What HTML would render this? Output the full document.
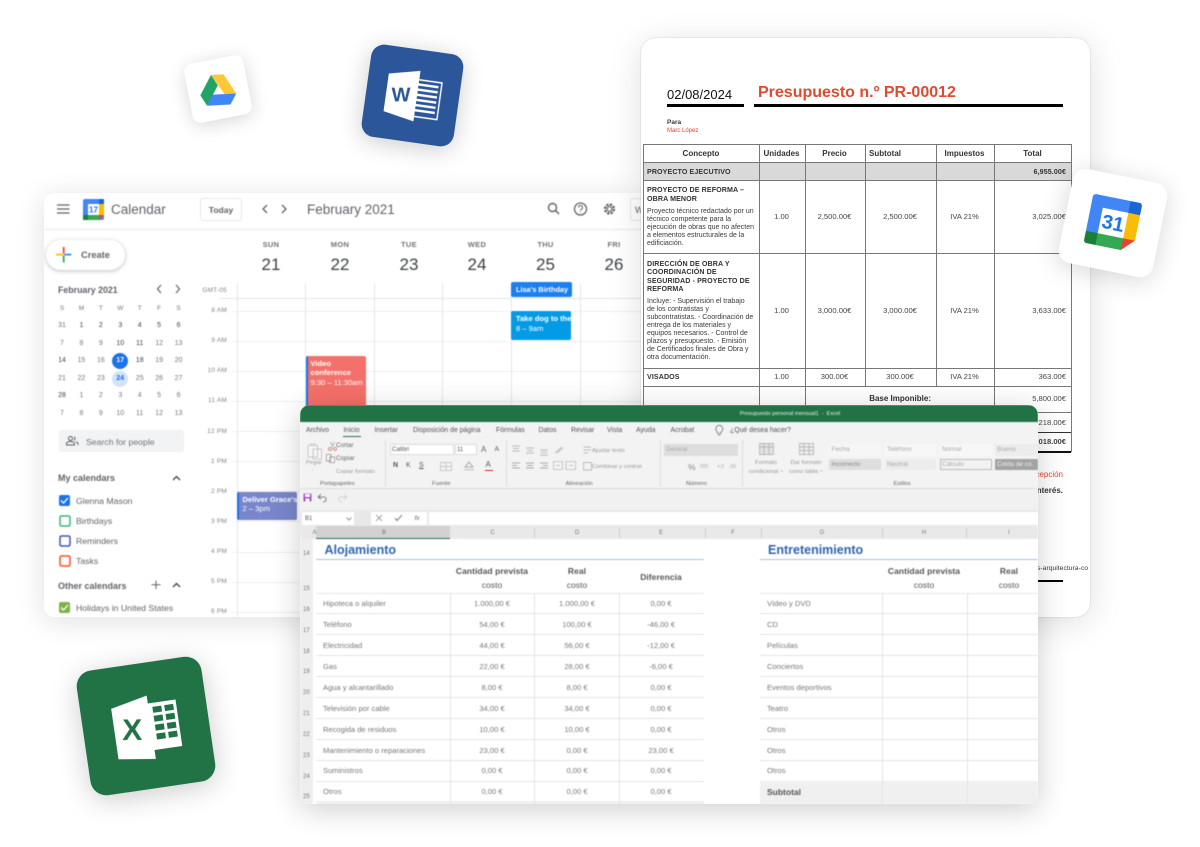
<!DOCTYPE html>
<html lang="es"><head><meta charset="utf-8"><title>Presupuesto</title>
<style>
html,body{margin:0;padding:0;background:#fff}
body{width:1200px;height:847px;position:relative;overflow:hidden;font-family:"Liberation Sans",sans-serif}
.p{position:absolute;overflow:hidden}
.t{position:absolute;white-space:nowrap;line-height:0}
.c{transform:translateX(-50%)}
.r{transform:translateX(-100%)}
.b{font-weight:bold}
.l{position:absolute;background:#ddd}
.box{position:absolute;box-sizing:border-box}
svg{position:absolute;overflow:visible}
#cal{left:44px;top:193px;width:600px;height:424px;background:#fff;border-radius:10px 0 0 10px;box-shadow:0 4px 28px rgba(0,0,0,.13);overflow:visible;color:#3c4043}
#calin{position:absolute;left:-44px;top:-193px;width:1200px;height:847px;clip-path:inset(193px 556px 230px 44px round 10px 0 0 10px);filter:blur(.4px)}
#calin .t{color:#3c4043;font-size:9px}
.g{color:#70757a!important}
.hd{font-size:7.5px!important;color:#70757a!important;font-weight:bold;letter-spacing:.3px}
.dn{font-size:17px!important;color:#3c4043}
.tm{font-size:6.5px!important;color:#80868b!important;letter-spacing:.2px}
#mini{position:absolute;left:52.3px;top:299.5px;display:grid;grid-template-columns:repeat(7,19.43px);grid-auto-rows:17.5px;font-size:7px;color:#3c4043;text-align:center;line-height:17.5px}
#mini span{display:block}#mini .o{color:#70757a}#mini .h{color:#70757a;font-size:6.5px}
#doc{left:641px;top:38px;width:449px;height:579px;background:#fff;border-radius:14px;box-shadow:0 6px 34px rgba(0,0,0,.13),0 0 1px rgba(0,0,0,.35)}
#docin{position:absolute;left:-641px;top:-38px;width:1200px;height:847px;filter:blur(.35px)}
#docin .t{font-size:7px;color:#3a3a3a}
#docin .v{font-size:7.6px;color:#444}
#docin .h{font-size:8px;font-weight:bold;color:#333}
#docin .bh{font-size:7.1px;font-weight:bold;color:#333;letter-spacing:.1px}
#docin .l{background:#777}
#xl{left:300px;top:405px;width:738px;height:399px;background:#fff;border-radius:10px 10px 6px 6px;box-shadow:0 5px 30px rgba(0,0,0,.2)}
#xlin{position:absolute;left:-300px;top:-405px;width:1200px;height:847px;filter:blur(.4px)}
#xlin .t{font-size:7.6px;color:#777}
.tab{font-size:6.9px!important;color:#555!important}
.rb{font-size:5.9px!important;color:#999!important}
.gl{font-size:5.9px!important;color:#666!important}
.nm{font-size:6px!important;color:#777!important}
.ch{font-size:6px!important;color:#777!important}
.hh{font-size:8.5px!important;font-weight:bold;color:#555!important;letter-spacing:.05px}
.sec{font-size:12.5px!important;font-weight:bold;color:#2f63ae!important}
.tile{position:absolute;box-sizing:border-box}
</style></head><body>

<div class="tile" style="left:188px;top:59px;width:60px;height:60px;border-radius:8px;background:#fff;transform:rotate(-11deg);box-shadow:0 3px 18px rgba(0,0,0,.16)">
<svg width="60" height="60" viewBox="0 0 60 60" style="left:0;top:0;filter:blur(.3px)">
<g transform="rotate(8 30 30) translate(3 3) scale(.9)">
<polygon points="23,14 37,14 50,36 37,36" fill="#fcc934"/>
<polygon points="23,14 30,26 17,48 10,36" fill="#1fa463"/>
<polygon points="23.5,36 50,36 43,48 17,48" fill="#4285f4"/>
</g></svg></div>

<div class="tile" style="left:366px;top:49px;width:93px;height:93px;border-radius:13px;background:#2b579a;transform:rotate(8deg);box-shadow:0 4px 24px rgba(0,0,0,.2)">
<svg width="93" height="93" viewBox="0 0 93 93" style="left:0;top:0;filter:blur(.3px)">
<polygon points="50,30 74,30 74,67 50,67" fill="none" stroke="#fff" stroke-width="1.4"/>
<g fill="#fff"><rect x="50" y="33.5" width="21" height="2.4"/><rect x="50" y="38.7" width="21" height="2.4"/><rect x="50" y="43.9" width="21" height="2.4"/><rect x="50" y="49.1" width="21" height="2.4"/><rect x="50" y="54.3" width="21" height="2.4"/><rect x="50" y="59.5" width="21" height="2.4"/></g>
<polygon points="20,28 51,21 51,72 20,66" fill="#fff"/>
<text x="35" y="54" text-anchor="middle" font-family="Liberation Sans" font-weight="bold" font-size="20" fill="#2b579a" transform="rotate(-8 35 47)">W</text>
</svg></div>

<div class="tile" style="left:83px;top:663px;width:126px;height:126px;border-radius:16px;background:#217346;transform:rotate(-8.3deg);box-shadow:0 5px 28px rgba(0,0,0,.2)">
<svg width="126" height="126" viewBox="0 0 126 126" style="left:0;top:0;filter:blur(.3px)">
<rect x="66" y="41" width="30" height="47" fill="#fff"/>
<g fill="#217346"><rect x="72" y="45" width="9" height="6"/><rect x="84" y="45" width="9" height="6"/><rect x="72" y="54" width="9" height="6"/><rect x="84" y="54" width="9" height="6"/><rect x="72" y="63" width="9" height="6"/><rect x="84" y="63" width="9" height="6"/><rect x="72" y="72" width="9" height="6"/><rect x="84" y="72" width="9" height="6"/></g>
<polygon points="31,41 68,33 68,97 31,92" fill="#fff"/>
<text x="49" y="75" text-anchor="middle" font-family="Liberation Sans" font-weight="bold" font-size="30" fill="#217346" transform="rotate(8 49 64)">X</text>
</svg></div>

<div class="p" id="cal" style="overflow:visible"><div id="calin">
<div class="l" style="left:44px;top:229px;width:600px;height:1px;background:#e8eaed"></div>
<svg width="14" height="10" style="left:57px;top:204px"><path d="M0 1H12.500M0 5H12.500M0 9H12.500" stroke="#5f6368" stroke-width="1.300"/></svg>
<svg width="21" height="21" viewBox="0 0 21 21" style="left:83px;top:199px">
<rect width="21" height="21" rx="2" fill="#4285f4"/><rect x="16" y="0" width="5" height="5" fill="#1967d2"/><rect x="16" y="5" width="5" height="11" fill="#fbbc04"/><rect x="5" y="16" width="11" height="5" fill="#34a853"/><rect x="0" y="16" width="5" height="5" fill="#188038"/><polygon points="16,16 21,16 16,21" fill="#ea4335"/><rect x="5" y="5" width="11" height="11" fill="#fff"/>
<text x="10.500" y="13.500" text-anchor="middle" font-family="Liberation Sans" font-size="8" font-weight="bold" fill="#1a73e8">17</text></svg>
<span class="t" style="left:111px;top:209.500px;font-size:13.500px;color:#5f6368">Calendar</span>
<div class="box" style="left:200px;top:198px;width:42px;height:23px;border:1px solid #e5e7e9;border-radius:3px"></div>
<span class="t c b" style="left:221px;top:209.500px;font-size:8.500px;color:#5f6368">Today</span>
<svg width="40" height="12" style="left:260px;top:203px"><path d="M7 2L3 6L7 10M22 2L26 6L22 10" fill="none" stroke="#5f6368" stroke-width="1.300"/></svg>
<span class="t" style="left:307px;top:209.500px;font-size:13.500px;color:#5f6368">February 2021</span>
<svg width="80" height="16" style="left:546px;top:201px"><circle cx="6.500" cy="6.500" r="4" fill="none" stroke="#5f6368" stroke-width="1.400"/><path d="M9.500 9.500L13 13" stroke="#5f6368" stroke-width="1.500"/><circle cx="34.500" cy="8" r="6" fill="none" stroke="#5f6368" stroke-width="1.300"/><path d="M32.500 6.500a2 2 0 1 1 3 1.700c-.7.400-1 .8-1 1.500M34.500 11v.8" fill="none" stroke="#5f6368" stroke-width="1"/><circle cx="63.500" cy="8" r="4.300" fill="none" stroke="#5f6368" stroke-width="2.600" stroke-dasharray="2.200 1.200"/><circle cx="63.500" cy="8" r="2.200" fill="none" stroke="#5f6368" stroke-width="1"/></svg>
<div class="box" style="left:630px;top:198px;width:30px;height:23px;border:1px solid #e5e7e9;border-radius:3px"></div>
<span class="t" style="left:635px;top:209.500px;font-size:9px;color:#5f6368">W</span>

<div class="box" style="left:46px;top:240px;width:79px;height:30px;border-radius:15px;background:#fff;box-shadow:0 1px 4px rgba(60,64,67,.35)"></div>
<svg width="16" height="16" style="left:56px;top:247px"><rect x="0" y="6.700" width="7" height="1.800" fill="#fbbc04"/><rect x="8.300" y="6.700" width="7" height="1.800" fill="#4285f4"/><rect x="6.800" y="0" width="1.800" height="6.700" fill="#ea4335"/><rect x="6.800" y="8.500" width="1.800" height="7" fill="#34a853"/></svg>
<span class="t b" style="left:81px;top:254.500px;font-size:9.300px;color:#5f6368">Create</span>

<span class="t b" style="left:58px;top:289.500px;font-size:8.800px;color:#5f6368">February 2021</span>
<svg width="30" height="10" style="left:155px;top:284px"><path d="M6 1L2.500 5L6 9M21 1L24.500 5L21 9" fill="none" stroke="#5f6368" stroke-width="1.200"/></svg>
<div class="box" style="left:112px;top:353px;width:16px;height:16px;border-radius:50%;background:#1a73e8"></div>
<div class="box" style="left:112px;top:370.500px;width:16px;height:16px;border-radius:50%;background:#d2e3fc"></div>
<div id="mini"><span class="h">S</span><span class="h">M</span><span class="h">T</span><span class="h">W</span><span class="h">T</span><span class="h">F</span><span class="h">S</span>
<span class="o">31</span><span>1</span><span>2</span><span>3</span><span>4</span><span>5</span><span>6</span>
<span class="o">7</span><span class="o">8</span><span class="o">9</span><span>10</span><span>11</span><span class="o">12</span><span class="o">13</span>
<span>14</span><span class="o">15</span><span class="o">16</span><span style="color:#fff;font-weight:bold">17</span><span>18</span><span class="o">19</span><span class="o">20</span>
<span class="o">21</span><span class="o">22</span><span class="o">23</span><span style="color:#1a73e8;font-weight:bold">24</span><span class="o">25</span><span class="o">26</span><span class="o">27</span>
<span>28</span><span class="o">1</span><span class="o">2</span><span class="o">3</span><span class="o">4</span><span class="o">5</span><span class="o">6</span>
<span class="o">7</span><span class="o">8</span><span class="o">9</span><span class="o">10</span><span class="o">11</span><span class="o">12</span><span class="o">13</span></div>

<div class="box" style="left:59px;top:430px;width:125px;height:22px;background:#f1f3f4;border-radius:3px"></div>
<svg width="13" height="10" style="left:66px;top:436px"><circle cx="4.500" cy="2.500" r="2" fill="none" stroke="#5f6368"/><path d="M.5 9V7.500C.5 6 3 5.500 4.500 5.500S8.500 6 8.500 7.500V9ZM8 .8a2 2 0 0 1 0 3.500M10 5.800c1 .3 2 .8 2 1.800V9" fill="none" stroke="#5f6368"/></svg>
<span class="t g" style="left:86px;top:441.500px;font-size:8.700px">Search for people</span>
<span class="t b" style="left:58px;top:477.500px;font-size:9px;color:#5f6368">My calendars</span>
<svg width="10" height="6" style="left:172px;top:475px"><path d="M1 5L4.500 1.500L8 5" fill="none" stroke="#3c4043" stroke-width="1.300"/></svg>
<div class="box" style="left:59px;top:495px;width:11px;height:11px;background:#1a73e8;border-radius:2px"></div>
<svg width="9" height="7" style="left:60px;top:497px"><path d="M1 3.500L3.500 6L8 1" fill="none" stroke="#fff" stroke-width="1.300"/></svg>
<span class="t" style="left:76px;top:500.500px;font-size:8.700px;color:#5f6368">Glenna Mason</span>
<svg width="12" height="12" style="left:58.500px;top:514.500px"><rect x="1" y="1" width="10" height="10" rx="1.500" fill="none" stroke="#33b679" stroke-width="1.500"/></svg>
<span class="t" style="left:76px;top:520.500px;font-size:8.700px;color:#5f6368">Birthdays</span>
<svg width="12" height="12" style="left:58.500px;top:534.500px"><rect x="1" y="1" width="10" height="10" rx="1.500" fill="none" stroke="#3f51b5" stroke-width="1.500"/></svg>
<span class="t" style="left:76px;top:540.500px;font-size:8.700px;color:#5f6368">Reminders</span>
<svg width="12" height="12" style="left:58.500px;top:554.500px"><rect x="1" y="1" width="10" height="10" rx="1.500" fill="none" stroke="#f4511e" stroke-width="1.500"/></svg>
<span class="t" style="left:76px;top:560.500px;font-size:8.700px;color:#5f6368">Tasks</span>
<span class="t b" style="left:58px;top:585.500px;font-size:9px;color:#5f6368">Other calendars</span>
<svg width="32" height="10" style="left:151px;top:580px"><path d="M5 .5V9M.5 4.800H9.500" stroke="#5f6368" stroke-width="1"/><path d="M22 7L25.500 3.500L29 7" fill="none" stroke="#3c4043" stroke-width="1.300"/></svg>
<div class="box" style="left:59px;top:602px;width:11px;height:11px;background:#7cb342;border-radius:2px"></div>
<svg width="9" height="7" style="left:60px;top:604px"><path d="M1 3.500L3.500 6L8 1" fill="none" stroke="#fff" stroke-width="1.300"/></svg>
<span class="t" style="left:76px;top:608px;font-size:8.700px;color:#5f6368">Holidays in United States</span>

<span class="t c hd" style="left:271px;top:245px">SUN</span><span class="t c hd" style="left:340px;top:245px">MON</span><span class="t c hd" style="left:409px;top:245px">TUE</span><span class="t c hd" style="left:477px;top:245px">WED</span><span class="t c hd" style="left:545.500px;top:245px">THU</span><span class="t c hd" style="left:614px;top:245px">FRI</span>
<span class="t c dn" style="left:271px;top:264.500px">21</span><span class="t c dn" style="left:340px;top:264.500px">22</span><span class="t c dn" style="left:409px;top:264.500px">23</span><span class="t c dn" style="left:477px;top:264.500px">24</span><span class="t c dn" style="left:545.500px;top:264.500px">25</span><span class="t c dn" style="left:614px;top:264.500px">26</span>

<span class="t r tm" style="left:227px;top:290.500px">GMT-05</span><span class="t r tm" style="left:227px;top:311px">8 AM</span><span class="t r tm" style="left:227px;top:341px">9 AM</span><span class="t r tm" style="left:227px;top:371px">10 AM</span><span class="t r tm" style="left:227px;top:401px">11 AM</span><span class="t r tm" style="left:227px;top:431.500px">12 PM</span><span class="t r tm" style="left:227px;top:461.500px">1 PM</span><span class="t r tm" style="left:227px;top:491.500px">2 PM</span><span class="t r tm" style="left:227px;top:521.500px">3 PM</span><span class="t r tm" style="left:227px;top:552px">4 PM</span><span class="t r tm" style="left:227px;top:582px">5 PM</span><span class="t r tm" style="left:227px;top:612px">6 PM</span>

<div class="l" style="left:220px;top:298px;width:424px;height:1px;background:#e2e4e6"></div>
<div class="l" style="left:232px;top:311px;width:412px;height:1px;background:#eceef0"></div><div class="l" style="left:232px;top:341px;width:412px;height:1px;background:#eceef0"></div><div class="l" style="left:232px;top:371px;width:412px;height:1px;background:#eceef0"></div><div class="l" style="left:232px;top:401px;width:412px;height:1px;background:#eceef0"></div><div class="l" style="left:232px;top:431px;width:412px;height:1px;background:#eceef0"></div><div class="l" style="left:232px;top:461px;width:412px;height:1px;background:#eceef0"></div><div class="l" style="left:232px;top:491px;width:412px;height:1px;background:#eceef0"></div><div class="l" style="left:232px;top:521px;width:412px;height:1px;background:#eceef0"></div><div class="l" style="left:232px;top:552px;width:412px;height:1px;background:#eceef0"></div><div class="l" style="left:232px;top:582px;width:412px;height:1px;background:#eceef0"></div><div class="l" style="left:232px;top:612px;width:412px;height:1px;background:#eceef0"></div>
<div class="l" style="left:237px;top:283px;width:1px;height:334px;background:#e4e6e8"></div><div class="l" style="left:305px;top:283px;width:1px;height:334px;background:#e4e6e8"></div><div class="l" style="left:373.500px;top:283px;width:1px;height:334px;background:#e4e6e8"></div><div class="l" style="left:442px;top:283px;width:1px;height:334px;background:#e4e6e8"></div><div class="l" style="left:510.500px;top:283px;width:1px;height:334px;background:#e4e6e8"></div><div class="l" style="left:579.500px;top:283px;width:1px;height:334px;background:#e4e6e8"></div>

<div class="box" style="left:511px;top:282px;width:61px;height:14.500px;background:#1a7ff0;border-radius:2px"></div>
<span class="t b" style="left:516px;top:289.500px;font-size:7.300px;color:#fff">Lisa's Birthday</span>
<div class="box" style="left:511px;top:311px;width:60px;height:29px;background:#039be5;border-radius:2px;overflow:hidden"><span class="t b" style="left:5px;top:7.500px;font-size:7.600px;color:#fff">Take dog to the vet</span><span class="t" style="left:5px;top:17.500px;font-size:7.600px;color:#fff">8 – 9am</span></div>
<div class="box" style="left:306px;top:356px;width:60px;height:52px;background:#f4706a;border-left:2px solid #1a73e8;border-radius:2px;overflow:hidden"><span class="t b" style="left:2.500px;top:7.500px;font-size:7.600px;color:#fff">Video</span><span class="t b" style="left:2.500px;top:17px;font-size:7.600px;color:#fff">conference</span><span class="t" style="left:2.500px;top:26.500px;font-size:7.600px;color:#fff">9:30 – 11:30am</span></div>
<div class="box" style="left:237px;top:492px;width:60px;height:28px;background:#7986cb;border-left:2px solid #1a73e8;border-radius:2px;overflow:hidden"><span class="t b" style="left:3.500px;top:7.500px;font-size:7.600px;color:#fff">Deliver Grace's gift</span><span class="t" style="left:3.500px;top:17px;font-size:7.600px;color:#fff">2 – 3pm</span></div>
</div></div>

<div class="p" id="doc" style="overflow:visible"><div id="docin">
<span class="t" style="left:667px;top:95px;color:#111"><span style="font-size:13px;color:#111">02/08/2024</span></span>
<span class="t b" style="left:758px;top:93px"><span style="font-size:16px;color:#e04a2f">Presupuesto n.º PR-00012</span></span>
<div class="l" style="left:667px;top:104px;width:77px;height:2.700px;background:#000"></div>
<div class="l" style="left:754px;top:104px;width:309px;height:2.700px;background:#000"></div>
<span class="t b" style="left:667px;top:122.500px"><span style="font-size:6.500px">Para</span></span>
<span class="t" style="left:667px;top:131px"><span style="font-size:6px;color:#e8402a">Marc López</span></span>

<div class="box" style="left:643px;top:162px;width:428px;height:18px;background:#d9d9d9"></div>
<div class="l" style="left:643px;top:144px;width:428px;height:1px"></div><div class="l" style="left:643px;top:162px;width:428px;height:1px"></div><div class="l" style="left:643px;top:180px;width:428px;height:1px"></div><div class="l" style="left:643px;top:252.500px;width:428px;height:1px"></div><div class="l" style="left:643px;top:367.500px;width:428px;height:1px"></div><div class="l" style="left:643px;top:385.500px;width:428px;height:1px"></div>
<div class="l" style="left:1038px;top:412px;width:33px;height:1px"></div><div class="l" style="left:1038px;top:431.500px;width:33px;height:1.200px;background:#333"></div><div class="l" style="left:1038px;top:451px;width:33px;height:1.800px;background:#111"></div>
<div class="l" style="left:643px;top:144px;width:1px;height:300px"></div><div class="l" style="left:758.500px;top:144px;width:1px;height:270px"></div><div class="l" style="left:804.500px;top:144px;width:1px;height:270px"></div><div class="l" style="left:864.500px;top:144px;width:1px;height:242px"></div><div class="l" style="left:936px;top:144px;width:1px;height:242px"></div><div class="l" style="left:994px;top:144px;width:1px;height:270px"></div><div class="l" style="left:1070.500px;top:144px;width:1px;height:308px"></div>

<span class="t c h" style="left:701px;top:153.500px">Concepto</span><span class="t c h" style="left:781.500px;top:153.500px">Unidades</span><span class="t c h" style="left:834.500px;top:153.500px">Precio</span><span class="t c h" style="left:885px;top:153.500px">Subtotal</span><span class="t c h" style="left:964.500px;top:153.500px">Impuestos</span><span class="t c h" style="left:1032.500px;top:153.500px">Total</span>
<span class="t bh" style="left:647px;top:171.500px">PROYECTO EJECUTIVO</span><span class="t r bh" style="left:1066px;top:171.500px">6,955.00€</span>
<span class="t bh" style="left:647px;top:190px">PROYECTO DE REFORMA –</span><span class="t bh" style="left:647px;top:199px">OBRA MENOR</span>
<span class="t" style="left:647px;top:211.500px">Proyecto técnico redactado por un</span><span class="t" style="left:647px;top:219.500px">técnico competente para la</span><span class="t" style="left:647px;top:227.500px">ejecución de obras que no afecten</span><span class="t" style="left:647px;top:235.500px">a elementos estructurales de la</span><span class="t" style="left:647px;top:244px">edificiación.</span>
<span class="t c v" style="left:781.500px;top:216.500px">1.00</span><span class="t c v" style="left:834.500px;top:216.500px">2,500.00€</span><span class="t c v" style="left:900px;top:216.500px">2,500.00€</span><span class="t c v" style="left:964.500px;top:216.500px">IVA 21%</span><span class="t r v" style="left:1066px;top:216.500px">3,025.00€</span>
<span class="t bh" style="left:647px;top:263.500px">DIRECCIÓN DE OBRA Y</span><span class="t bh" style="left:647px;top:272px">COORDINACIÓN DE</span><span class="t bh" style="left:647px;top:280.500px">SEGURIDAD - PROYECTO DE</span><span class="t bh" style="left:647px;top:289px">REFORMA</span>
<span class="t" style="left:647px;top:301.500px">Incluye: - Supervisión el trabajo</span><span class="t" style="left:647px;top:309.500px">de los contratistas y</span><span class="t" style="left:647px;top:317.500px">subcontratistas. - Coordinación de</span><span class="t" style="left:647px;top:325.500px">entrega de los materiales y</span><span class="t" style="left:647px;top:333.500px">equipos necesarios. - Control de</span><span class="t" style="left:647px;top:341.500px">plazos y presupuesto. - Emisión</span><span class="t" style="left:647px;top:349.500px">de Certificados finales de Obra y</span><span class="t" style="left:647px;top:357.500px">otra documentación.</span>
<span class="t c v" style="left:781.500px;top:310.500px">1.00</span><span class="t c v" style="left:834.500px;top:310.500px">3,000.00€</span><span class="t c v" style="left:900px;top:310.500px">3,000.00€</span><span class="t c v" style="left:964.500px;top:310.500px">IVA 21%</span><span class="t r v" style="left:1066px;top:310.500px">3,633.00€</span>
<span class="t bh" style="left:647px;top:377px">VISADOS</span>
<span class="t c v" style="left:781.500px;top:377px">1.00</span><span class="t c v" style="left:834.500px;top:377px">300.00€</span><span class="t c v" style="left:900px;top:377px">300.00€</span><span class="t c v" style="left:964.500px;top:377px">IVA 21%</span><span class="t r v" style="left:1066px;top:377px">363.00€</span>
<span class="t r h" style="left:931px;top:398.500px">Base Imponible:</span><span class="t r v" style="left:1066px;top:398.500px">5,800.00€</span>
<span class="t r v" style="left:1066px;top:422.500px">1,218.00€</span><span class="t r v b" style="left:1066px;top:441.500px">7,018.00€</span>
<span class="t r" style="left:1063px;top:475px"><span style="font-size:8px;color:#e04a2f">recepción</span></span>
<span class="t r b" style="left:1063px;top:491px"><span style="font-size:8px">interés.</span></span>
<span class="t r" style="left:1088px;top:568.500px"><span style="font-size:6.800px">www.reformas-arquitectura-co</span></span>
<div class="l" style="left:980px;top:579.500px;width:83px;height:2.700px;background:#000"></div>
</div></div>

<div class="tile" style="left:1065px;top:175px;width:96px;height:96px;border-radius:13px;background:#fff;transform:rotate(11.400deg);box-shadow:0 4px 26px rgba(0,0,0,.16)">
<svg width="50" height="50" viewBox="0 0 50 50" style="left:23px;top:23px;filter:blur(.3px)">
<rect width="50" height="50" rx="3" fill="#4285f4"/>
<path d="M38 0H47a3 3 0 0 1 3 3V12H38Z" fill="#1967d2"/>
<rect x="38" y="12" width="12" height="26" fill="#fbbc04"/>
<rect x="12" y="38" width="26" height="12" fill="#34a853"/>
<path d="M0 38H12V50H3a3 3 0 0 1-3-3Z" fill="#188038"/>
<polygon points="38,38 50,38 38,50" fill="#ea4335"/>
<polygon points="38,50 50,38 51,51" fill="#fff"/>
<rect x="12" y="12" width="26" height="26" fill="#fff"/>
<text x="25" y="32" text-anchor="middle" font-family="Liberation Sans" font-size="20" font-weight="bold" fill="#1a73e8">31</text>
</svg></div>

<div class="p" id="xl"><div id="xlin">
<div class="box" style="left:300px;top:405px;width:738px;height:17px;background:#217346"></div>
<span class="t c" style="left:790px;top:413px"><span style="font-size:5.500px;color:#e9f2ec;white-space:pre">Presupuesto personal mensual1  -  Excel</span></span>
<div class="box" style="left:300px;top:422px;width:738px;height:66px;background:#f3f3f3"></div>
<div class="box" style="left:300px;top:488px;width:738px;height:22px;background:#f1f1f1;border-top:1px solid #ddd"></div>
<div class="box" style="left:300px;top:510px;width:738px;height:16px;background:#e8e8e8"></div>
<div class="box" style="left:300px;top:526px;width:738px;height:13px;background:#e9e9e9"></div>
<div class="box" style="left:300px;top:539px;width:13px;height:265px;background:#eee"></div>

<span class="t tab" style="left:306px;top:430.500px">Archivo</span><span class="t tab" style="left:343.500px;top:430.500px">Inicio</span><div class="l" style="left:343px;top:435.500px;width:18px;height:1.500px;background:#217346"></div><span class="t tab" style="left:374.500px;top:430.500px">Insertar</span><span class="t tab" style="left:413px;top:430.500px">Disposición de página</span><span class="t tab" style="left:496px;top:430.500px">Fórmulas</span><span class="t tab" style="left:538.500px;top:430.500px">Datos</span><span class="t tab" style="left:571px;top:430.500px">Revisar</span><span class="t tab" style="left:607px;top:430.500px">Vista</span><span class="t tab" style="left:636px;top:430.500px">Ayuda</span><span class="t tab" style="left:670.500px;top:430.500px">Acrobat</span>
<svg width="9" height="12" style="left:715px;top:424px"><path d="M2.500 8C1 6.800.8 5.800.8 4.800a3.500 3.500 0 0 1 7 0C7.800 5.800 7.500 6.800 6 8V9.500H2.500ZM3 11H5.500" fill="none" stroke="#777" stroke-width=".8"/></svg>
<span class="t tab" style="left:730px;top:430.500px">¿Qué desea hacer?</span>

<svg width="16" height="17" style="left:307px;top:443px"><path d="M1 2.500H10.500V14H1ZM3.500 2.500V1H8V2.500M6 6H14.500V16H6Z" fill="#f5f5f5" stroke="#bdbdbd" stroke-width=".8"/></svg>
<span class="t rb" style="left:306px;top:463px">Pegar</span><span class="t rb" style="left:312px;top:471px">·</span>
<svg width="9" height="9" style="left:328px;top:442px"><path d="M2.500 0L5 5M6.500 0L4 5" stroke="#8aa" stroke-width=".8"/><circle cx="2" cy="7" r="1.500" fill="none" stroke="#c77" stroke-width=".8"/><circle cx="7" cy="7" r="1.500" fill="none" stroke="#c77" stroke-width=".8"/></svg>
<span class="t" style="left:336px;top:446px;font-size:6.300px!important;color:#666!important">Cortar</span>
<svg width="9" height="9" style="left:326px;top:454px"><path d="M.5.5H5V7H.5ZM3.500 3H8.500V8.500H3.500Z" fill="#fff" stroke="#888" stroke-width=".7"/></svg>
<span class="t" style="left:336px;top:458.500px;font-size:6.300px!important;color:#666!important">Copiar</span>
<span class="t rb" style="left:336px;top:471.500px">Copiar formato</span>
<span class="t gl" style="left:320px;top:483.500px">Portapapeles</span><span class="t gl" style="left:432px;top:483.500px">Fuente</span><span class="t gl" style="left:565.500px;top:483.500px">Alineación</span><span class="t gl" style="left:686px;top:483.500px">Número</span><span class="t gl" style="left:893.500px;top:483.500px">Estilos</span>
<div class="l" style="left:385px;top:440px;width:1px;height:46px"></div><div class="l" style="left:506px;top:440px;width:1px;height:46px"></div><div class="l" style="left:660px;top:440px;width:1px;height:46px"></div><div class="l" style="left:742px;top:440px;width:1px;height:46px"></div>
<div class="box" style="left:390px;top:444px;width:64px;height:11px;background:#fff;border:1px solid #ddd"></div><span class="t" style="left:392px;top:450px;font-size:6px!important;color:#555!important">Calibri</span>
<div class="box" style="left:455px;top:444px;width:22px;height:11px;background:#fff;border:1px solid #ddd"></div><span class="t" style="left:457px;top:450px;font-size:6px!important;color:#555!important">11</span>
<span class="t" style="left:481px;top:450px;font-size:8px!important;color:#666!important">A</span><span class="t" style="left:494.500px;top:450px;font-size:7px!important;color:#666!important">A</span>
<span class="t b" style="left:393px;top:466px;font-size:7px!important;color:#555!important">N</span><span class="t" style="left:406px;top:466px;font-size:7px!important;color:#555!important">K</span><span class="t" style="left:419px;top:466px;font-size:7px!important;color:#555!important;text-decoration:underline">S</span>
<svg width="12" height="9" style="left:440px;top:462px"><path d="M.5.5H11.500V8.500H.5ZM6 .5V8.500M.5 4.500H11.500" fill="none" stroke="#bbb" stroke-width=".7"/></svg>
<svg width="10" height="10" style="left:464px;top:461px"><path d="M5 1L9 6H1Z" fill="none" stroke="#999" stroke-width=".8"/><rect y="8" width="10" height="1.500" fill="#ccc"/></svg>
<span class="t" style="left:485.500px;top:465px;font-size:8px!important;color:#555!important">A</span><div class="l" style="left:485px;top:469.500px;width:8px;height:1.500px;background:#e02020"></div>
<svg width="50" height="30" style="left:512px;top:445px"><path d="M0 1H8M1 3.500H7M0 6H8M14 3H22M15 5.500H21M14 8H22M28 5H36M29 7.500H35M28 10H36" stroke="#bbb" stroke-width=".9"/><path d="M0 18H8M0 20.500H5M0 23H8M14 18H22M15 20.500H21M14 23H22M28 18H36M31 20.500H36M28 23H36" stroke="#aaa" stroke-width=".9"/></svg>
<svg width="24" height="10" style="left:553px;top:461px"><path d="M.5.5H9.500V8.500H.5ZM13 .5H22.500V8.500H13ZM3 4.500H7M16 4.500H20" fill="none" stroke="#bbb" stroke-width=".8"/></svg>
<svg width="10" height="8" style="left:554px;top:446px"><path d="M1 7L8 1M3 7L9 2" stroke="#bbb" stroke-width="1"/></svg>
<span class="t rb" style="left:592px;top:450.500px">Ajustar texto</span><span class="t rb" style="left:592px;top:466.500px">Combinar y centrar</span>
<svg width="9" height="9" style="left:583px;top:446px"><path d="M.5 1H8M.5 4H8M.5 7H5" stroke="#bbb" stroke-width=".9"/></svg><svg width="9" height="9" style="left:583px;top:462px"><path d="M.5.5H8.500V8H.5Z" fill="none" stroke="#bbb" stroke-width=".9"/></svg>
<div class="box" style="left:664px;top:444px;width:74px;height:12px;background:#ddd"></div><span class="t" style="left:666px;top:450px;font-size:6px!important;color:#aaa!important">General</span>
<span class="t" style="left:688px;top:466.500px;font-size:8.500px!important;color:#888!important">%</span><span class="t" style="left:700px;top:466.500px;font-size:5px!important;color:#aaa!important">000</span><span class="t" style="left:717px;top:466.500px;font-size:5px!important;color:#aaa!important">+,0</span><span class="t" style="left:729px;top:466.500px;font-size:5px!important;color:#aaa!important">,00</span>
<svg width="15" height="12" style="left:759px;top:443px"><path d="M.5.5H14.500V11.500H.5ZM.5 4H14.500M5 .5V11.500M10 .5V11.500" fill="#e2e2e2" stroke="#aaa" stroke-width=".7"/></svg>
<svg width="15" height="12" style="left:799px;top:443px"><path d="M.5.5H14.500V11.500H.5ZM.5 4H14.500M.5 7.500H14.500M5 .5V11.500M10 .5V11.500" fill="#eee" stroke="#aaa" stroke-width=".7"/></svg>
<span class="t c rb" style="left:766px;top:463px">Formato</span><span class="t c rb" style="left:766px;top:471.500px">condicional ~</span><span class="t c rb" style="left:806px;top:463px">Dar formato</span><span class="t c rb" style="left:806px;top:471.500px">como tabla ~</span>
<div class="box" style="left:829px;top:444px;width:52px;height:12px;background:#f7f5f7"></div><div class="box" style="left:885px;top:444px;width:51px;height:12px;background:#f7f7f7"></div><div class="box" style="left:940px;top:444px;width:52px;height:12px;background:#f7f7f7"></div><div class="box" style="left:995px;top:444px;width:43px;height:12px;background:#ececec"></div>
<div class="box" style="left:829px;top:459px;width:52px;height:11px;background:#dedede"></div><div class="box" style="left:885px;top:459px;width:51px;height:11px;background:#ececec"></div><div class="box" style="left:940px;top:459px;width:52px;height:11px;background:#f2f2f2;border:1px solid #bbb"></div><div class="box" style="left:995px;top:459px;width:43px;height:11px;background:#a3a3a3"></div>
<span class="t" style="left:831.500px;top:450px;font-size:6.500px!important;color:#aaa!important">Fecha</span><span class="t" style="left:887px;top:450px;font-size:6.500px!important;color:#aaa!important">Teléfono</span><span class="t" style="left:942px;top:450px;font-size:6px!important;color:#aaa!important">Normal</span><span class="t" style="left:997px;top:450px;font-size:6.500px!important;color:#aaa!important">Bueno</span>
<span class="t" style="left:831.500px;top:464.500px;font-size:6.500px!important;color:#888!important">Incorrecto</span><span class="t" style="left:887px;top:464.500px;font-size:6.500px!important;color:#aaa!important">Neutral</span><span class="t" style="left:942px;top:464.500px;font-size:6.500px!important;color:#aaa!important">Cálculo</span><span class="t" style="left:997px;top:464.500px;font-size:6.500px!important;color:#eee!important">Celda de co.</span>

<svg width="60" height="10" style="left:303px;top:493px"><rect x=".5" y=".5" width="8" height="8" rx="1" fill="#a64ac9"/><rect x="2" y="1" width="5" height="3" fill="#fff"/><rect x="2.500" y="5.500" width="4" height="3" fill="#fff"/><path d="M15 4L18 1M15 4L18 6M15 4H21C24 4 24 9 20 9" fill="none" stroke="#666" stroke-width=".8"/><path d="M44 4L41 1M44 4L41 6M44 4H38C35 4 35 9 39 9" fill="none" stroke="#ccc" stroke-width=".8"/></svg>
<div class="box" style="left:302px;top:512px;width:52px;height:13px;background:#fff"></div><span class="t" style="left:305px;top:518.500px;font-size:6px!important;color:#555!important">B1</span>
<svg width="6" height="4" style="left:346px;top:516.500px"><path d="M.5.5L3 3L5.500.5" fill="none" stroke="#777" stroke-width=".8"/></svg>
<div class="box" style="left:371px;top:512px;width:56px;height:13px;background:#fff"></div><div class="box" style="left:429px;top:512px;width:609px;height:13px;background:#fff"></div>
<svg width="48" height="8" style="left:376px;top:514px"><path d="M0 1L6 7M6 1L0 7" stroke="#888" stroke-width=".8"/><path d="M19 4L21 6.500L26 1" fill="none" stroke="#666" stroke-width=".9"/></svg>
<span class="t" style="left:414.500px;top:518.500px;font-size:6.500px!important;color:#666!important"><i>fx</i></span>
<div class="box" style="left:316px;top:526px;width:134px;height:13px;background:#d2d2d2;border-bottom:1px solid #217346"></div>
<span class="t c ch" style="left:314.500px;top:533px">A</span><span class="t c ch" style="left:384px;top:533px">B</span><span class="t c ch" style="left:492.500px;top:533px">C</span><span class="t c ch" style="left:577px;top:533px">D</span><span class="t c ch" style="left:661px;top:533px">E</span><span class="t c ch" style="left:733px;top:533px">F</span><span class="t c ch" style="left:822px;top:533px">G</span><span class="t c ch" style="left:924px;top:533px">H</span><span class="t c ch" style="left:1009px;top:533px">I</span>
<div class="l" style="left:534px;top:528px;width:1px;height:10px;background:#ccc"></div><div class="l" style="left:619px;top:528px;width:1px;height:10px;background:#ccc"></div><div class="l" style="left:705px;top:528px;width:1px;height:10px;background:#ccc"></div><div class="l" style="left:761px;top:528px;width:1px;height:10px;background:#ccc"></div><div class="l" style="left:882px;top:528px;width:1px;height:10px;background:#ccc"></div><div class="l" style="left:966px;top:528px;width:1px;height:10px;background:#ccc"></div>

<span class="t nm" style="left:303px;top:553.500px">14</span><span class="t nm" style="left:303px;top:589px">15</span><span class="t nm" style="left:303px;top:609.500px">16</span><span class="t nm" style="left:303px;top:630.500px">17</span><span class="t nm" style="left:303px;top:651.500px">18</span><span class="t nm" style="left:303px;top:672px">19</span><span class="t nm" style="left:303px;top:693px">20</span><span class="t nm" style="left:303px;top:714px">21</span><span class="t nm" style="left:303px;top:735px">22</span><span class="t nm" style="left:303px;top:755.500px">23</span><span class="t nm" style="left:303px;top:776.500px">24</span><span class="t nm" style="left:303px;top:797px">25</span>

<span class="t sec" style="left:324.500px;top:550px">Alojamiento</span><span class="t sec" style="left:768px;top:550px">Entretenimiento</span>
<div class="l" style="left:316px;top:559px;width:388px;height:1px;background:#a8c4e2"></div><div class="l" style="left:760px;top:559px;width:278px;height:1px;background:#a8c4e2"></div>
<div class="l" style="left:316px;top:593px;width:388px;height:1px;background:#e8e8e8"></div><div class="l" style="left:760px;top:593px;width:278px;height:1px;background:#e8e8e8"></div>
<div class="l" style="left:316px;top:613px;width:388px;height:1px;background:#e3e3e3"></div><div class="l" style="left:316px;top:634px;width:388px;height:1px;background:#e3e3e3"></div><div class="l" style="left:316px;top:655px;width:388px;height:1px;background:#e3e3e3"></div><div class="l" style="left:316px;top:676px;width:388px;height:1px;background:#e3e3e3"></div><div class="l" style="left:316px;top:697px;width:388px;height:1px;background:#e3e3e3"></div><div class="l" style="left:316px;top:718px;width:388px;height:1px;background:#e3e3e3"></div><div class="l" style="left:316px;top:739px;width:388px;height:1px;background:#e3e3e3"></div><div class="l" style="left:316px;top:760px;width:388px;height:1px;background:#e3e3e3"></div><div class="l" style="left:316px;top:781px;width:388px;height:1px;background:#e3e3e3"></div><div class="l" style="left:316px;top:801px;width:388px;height:3px;background:#eee"></div>
<div class="l" style="left:760px;top:613px;width:278px;height:1px;background:#e3e3e3"></div><div class="l" style="left:760px;top:634px;width:278px;height:1px;background:#e3e3e3"></div><div class="l" style="left:760px;top:655px;width:278px;height:1px;background:#e3e3e3"></div><div class="l" style="left:760px;top:676px;width:278px;height:1px;background:#e3e3e3"></div><div class="l" style="left:760px;top:697px;width:278px;height:1px;background:#e3e3e3"></div><div class="l" style="left:760px;top:718px;width:278px;height:1px;background:#e3e3e3"></div><div class="l" style="left:760px;top:739px;width:278px;height:1px;background:#e3e3e3"></div><div class="l" style="left:760px;top:760px;width:278px;height:1px;background:#e3e3e3"></div>
<div class="box" style="left:760px;top:781px;width:278px;height:23px;background:#f0f0f0"></div>
<div class="l" style="left:449.500px;top:593px;width:1px;height:211px;background:#e3e3e3"></div><div class="l" style="left:534px;top:593px;width:1px;height:211px;background:#e3e3e3"></div><div class="l" style="left:619px;top:593px;width:1px;height:211px;background:#e3e3e3"></div><div class="l" style="left:882px;top:593px;width:1px;height:211px;background:#e3e3e3"></div><div class="l" style="left:966.500px;top:593px;width:1px;height:211px;background:#e3e3e3"></div>

<span class="t c hh" style="left:492px;top:571px">Cantidad prevista</span><span class="t c hh" style="left:492px;top:584.500px;font-weight:normal">costo</span><span class="t c hh" style="left:577px;top:571px">Real</span><span class="t c hh" style="left:577px;top:584.500px;font-weight:normal">costo</span><span class="t c hh" style="left:661px;top:577px">Diferencia</span>
<span class="t c hh" style="left:924px;top:571px">Cantidad prevista</span><span class="t c hh" style="left:924px;top:584.500px;font-weight:normal">costo</span><span class="t c hh" style="left:1009px;top:571px">Real</span><span class="t c hh" style="left:1009px;top:584.500px;font-weight:normal">costo</span>

<span class="t" style="left:323px;top:604px">Hipoteca o alquiler</span><span class="t" style="left:323px;top:625px">Teléfono</span><span class="t" style="left:323px;top:645.500px">Electricidad</span><span class="t" style="left:323px;top:666.500px">Gas</span><span class="t" style="left:323px;top:687.500px">Agua y alcantarillado</span><span class="t" style="left:323px;top:708.500px">Televisión por cable</span><span class="t" style="left:323px;top:729.500px">Recogida de residuos</span><span class="t" style="left:323px;top:750.500px">Mantenimiento o reparaciones</span><span class="t" style="left:323px;top:771px">Suministros</span><span class="t" style="left:323px;top:791.500px">Otros</span>
<span class="t c" style="left:492px;top:604px">1.000,00 €</span><span class="t c" style="left:577px;top:604px">1.000,00 €</span><span class="t c" style="left:661px;top:604px">0,00 €</span>
<span class="t c" style="left:492px;top:625px">54,00 €</span><span class="t c" style="left:577px;top:625px">100,00 €</span><span class="t c" style="left:661px;top:625px">-46,00 €</span>
<span class="t c" style="left:492px;top:645.500px">44,00 €</span><span class="t c" style="left:577px;top:645.500px">56,00 €</span><span class="t c" style="left:661px;top:645.500px">-12,00 €</span>
<span class="t c" style="left:492px;top:666.500px">22,00 €</span><span class="t c" style="left:577px;top:666.500px">28,00 €</span><span class="t c" style="left:661px;top:666.500px">-6,00 €</span>
<span class="t c" style="left:492px;top:687.500px">8,00 €</span><span class="t c" style="left:577px;top:687.500px">8,00 €</span><span class="t c" style="left:661px;top:687.500px">0,00 €</span>
<span class="t c" style="left:492px;top:708.500px">34,00 €</span><span class="t c" style="left:577px;top:708.500px">34,00 €</span><span class="t c" style="left:661px;top:708.500px">0,00 €</span>
<span class="t c" style="left:492px;top:729.500px">10,00 €</span><span class="t c" style="left:577px;top:729.500px">10,00 €</span><span class="t c" style="left:661px;top:729.500px">0,00 €</span>
<span class="t c" style="left:492px;top:750.500px">23,00 €</span><span class="t c" style="left:577px;top:750.500px">0,00 €</span><span class="t c" style="left:661px;top:750.500px">23,00 €</span>
<span class="t c" style="left:492px;top:771px">0,00 €</span><span class="t c" style="left:577px;top:771px">0,00 €</span><span class="t c" style="left:661px;top:771px">0,00 €</span>
<span class="t c" style="left:492px;top:791.500px">0,00 €</span><span class="t c" style="left:577px;top:791.500px">0,00 €</span><span class="t c" style="left:661px;top:791.500px">0,00 €</span>
<span class="t" style="left:767px;top:604px">Vídeo y DVD</span><span class="t" style="left:767px;top:625px">CD</span><span class="t" style="left:767px;top:645.500px">Películas</span><span class="t" style="left:767px;top:666.500px">Conciertos</span><span class="t" style="left:767px;top:687.500px">Eventos deportivos</span><span class="t" style="left:767px;top:708.500px">Teatro</span><span class="t" style="left:767px;top:729.500px">Otros</span><span class="t" style="left:767px;top:750.500px">Otros</span><span class="t" style="left:767px;top:771px">Otros</span><span class="t b" style="left:767px;top:791.500px;font-size:8.500px!important;color:#555!important">Subtotal</span>
</div></div>
</body></html>
